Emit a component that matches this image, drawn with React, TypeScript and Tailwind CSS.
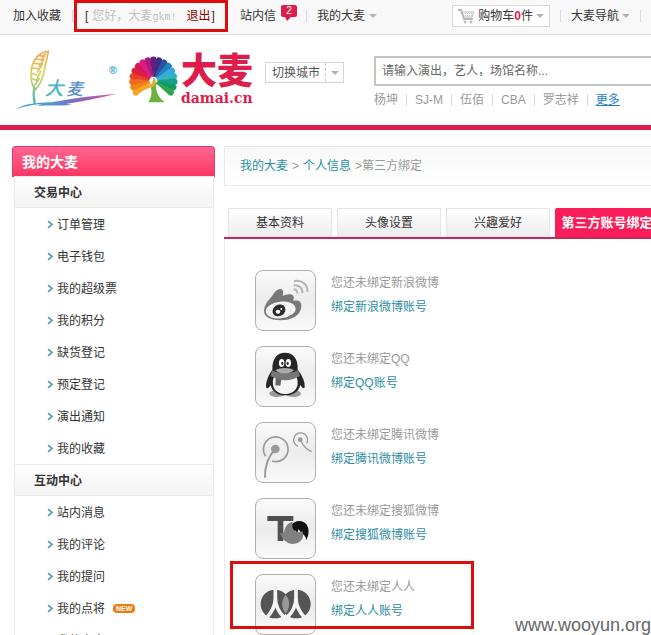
import type { ReactNode } from "react";

const tradeLinks = ["订单管理", "电子钱包", "我的超级票", "我的积分", "缺货登记", "预定登记", "演出通知", "我的收藏"];
const socialLinks = ["站内消息", "我的评论", "我的提问", "我的点将", "我的文章"];
const hotWords = ["杨坤", "SJ-M", "伍佰", "CBA", "罗志祥"];
const tabs = ["基本资料", "头像设置", "兴趣爱好"];

const petals = [
  "#f5a623", "#f08519", "#ed6c1f", "#e8422a", "#dc1f3c", "#d9155a", "#dd1a80", "#b01880",
  "#651d80", "#3f2a86", "#2552a3", "#2080c4", "#36a9dc", "#2fb3c0", "#169f8c", "#119b62", "#2fa84a",
];

function Caret() {
  return (
    <svg className="h-1 w-2 shrink-0" viewBox="0 0 8 4" aria-hidden="true">
      <path d="M0 0h8L4 4z" fill="#b3b3b3" />
    </svg>
  );
}

function Divider() {
  return <span className="h-3 w-px shrink-0 bg-[#d9d9d9]" />;
}

function WheatLogo() {
  return (
    <svg className="h-[61px] w-[102px] shrink-0" viewBox="48 150 306 183" role="img" aria-label="大麦">
      <defs>
        <linearGradient id="wheat" gradientUnits="userSpaceOnUse" x1="0" y1="152" x2="0" y2="305">
          <stop offset="0" stopColor="#f0a850" />
          <stop offset="0.5" stopColor="#d8d060" />
          <stop offset="1" stopColor="#56b8b0" />
        </linearGradient>
        <linearGradient id="ground" x1="0" y1="0" x2="1" y2="0">
          <stop offset="0" stopColor="#3ba8cf" />
          <stop offset="0.4" stopColor="#5a8fd0" />
          <stop offset="0.65" stopColor="#8e62b5" />
          <stop offset="1" stopColor="#dc5a9c" />
        </linearGradient>
      </defs>
      <g fill="none" stroke="url(#wheat)" strokeLinecap="round">
        <path d="M145 154C112 156 94 187 93 222c0 22 4 37 13 47 14-13 22-34 27-58 4-21 9-39 12-57z" strokeWidth="5" />
        <path d="M104 255l14-20M97 236l18 7M110 238l12-24M95 220l16 5M113 216l15-25M98 204l17 2M118 198l14-20M103 190l16 2M124 180l12-18M110 177l16 3M118 166l15 4" strokeWidth="5" />
        <path d="M103 262c-3 16-3 31 1 47" strokeWidth="7" />
      </g>
      <path d="M48 328c13-10 28-14 47-17 27-4 53-2 78-7 60-12 116-17 178-23-47 11-99 22-154 31 5 1 11 1 18 2-35 5-67 1-101 4 5-3 9-4 14-5-29 0-55 6-80 15z" fill="url(#ground)" />
      <text x="134" y="286" fontSize="56" fontWeight="500" fontStyle="italic" fontFamily="'Noto Sans CJK SC', sans-serif" fill="#4ab5c2">大</text>
      <text x="199" y="286" fontSize="50" fontWeight="500" fontStyle="italic" fontFamily="'Noto Sans CJK SC', sans-serif" fill="#578fce">麦</text>
      <text x="327" y="221" fontSize="32" fontWeight="700" fontFamily="'Liberation Sans', sans-serif" fill="#3b9bd0">®</text>
    </svg>
  );
}

function FlowerLogo() {
  return (
    <svg className="h-12 w-[49px] shrink-0" viewBox="387 166 147 144" aria-hidden="true">
      {petals.map((color, i) => (
        <path key={color} d="M458 228L450.500 177a9.500 9.500 0 0 1 19 0L462 228z" fill={color} transform={`rotate(${-124 + i * 15.5} 460 240)`} />
      ))}
      <path d="M434 312l22-58h12l34 58z" fill="#fff" />
      <path d="M445 305c9-14 12-29 8-42l8-31c4 4 6 9 5 15l11-8-10 17c2 20 10 37 28 49z" fill="#6cb33e" />
      <path d="M420 276c10-11 20-22 34-27 9-5 10-13 4-22 12 10 11 22 2 31-14 3-26 8-40 18z" fill="#f0a828" />
    </svg>
  );
}

function Cart() {
  return (
    <svg className="h-[15px] w-[17px] shrink-0" viewBox="0 0 17 15" fill="none" stroke="#b8b8b8" aria-hidden="true">
      <path d="M0 1h3l3 9h9" strokeWidth="2" />
      <path d="M5 3h11l-2 5H6" />
      <path d="M7 4.500h8M7 6.500h7" strokeDasharray="1 1" />
      <circle cx="7" cy="13" r="1" fill="#b8b8b8" />
      <circle cx="13" cy="13" r="1" fill="#b8b8b8" />
    </svg>
  );
}

type Account = { name: string; link: string; viewBox: string; art: ReactNode; marked?: boolean };

const accounts: Account[] = [
  {
    name: "新浪微博",
    link: "绑定新浪微博账号",
    viewBox: "49 33 177 177",
    art: (
      <>
        <path d="M73 154c0-18 12-32 22-43 6-8 13-22 26-24 9-1 12 9 8 21 10-5 28-8 32 0 3 5 1 10-1 15 16-4 26 2 25 15 0 28-31 43-61 43-28 0-51-9-51-27z" fill="#787878" />
        <ellipse cx="123" cy="150" rx="45" ry="25" fill="#f4f4f4" transform="rotate(-7 123 150)" />
        <ellipse cx="118" cy="151" rx="20" ry="17" fill="#2b2b2b" transform="rotate(-30 118 151)" />
        <ellipse cx="115" cy="155" rx="7" ry="6" fill="#fff" />
        <circle cx="125" cy="147" r="3" fill="#fff" />
        <path d="M163 63c24-4 42 10 40 33M162 76c16-2 27 8 26 23M162 89c7-1 12 4 11 11" fill="none" stroke="#b5b5b5" strokeWidth="6" />
      </>
    ),
  },
  {
    name: "QQ",
    link: "绑定QQ账号",
    viewBox: "49 261 177 177",
    art: (
      <>
        <ellipse cx="112" cy="401" rx="23" ry="10" fill="#999" />
        <ellipse cx="161" cy="401" rx="23" ry="10" fill="#999" />
        <path d="M98 329c-1-33 14-51 38-51s40 18 38 51c12 15 23 35 21 53-1 6-8 2-13-7-5 20-22 31-45 31s-39-10-44-31c-5 9-12 13-14 6 0-18 8-37 19-52z" fill="#252525" />
        <path d="M104 347h65c15 33-6 55-32 55s-47-20-33-55z" fill="#f5f5f5" />
        <path d="M97 331c23 12 54 12 78 0l6 17c-29 17-60 17-88 0z" fill="#777" />
        <path d="M108 354l17 4-3 19-15-1z" fill="#666" />
        <ellipse cx="126" cy="309" rx="8" ry="12" fill="#fff" />
        <ellipse cx="146" cy="309" rx="8" ry="12" fill="#fff" />
        <ellipse cx="128" cy="310" rx="3" ry="5" fill="#222" />
        <ellipse cx="144" cy="310" rx="3" ry="5" fill="#222" />
        <path d="M107 331c14-9 43-9 56 0-15 13-41 13-56 0z" fill="#aaa" />
      </>
    ),
  },
  {
    name: "腾讯微博",
    link: "绑定腾讯微博账号",
    viewBox: "49 39 177 177",
    art: (
      <g fill="none" stroke="#999">
        <path d="M78 139a37 37 0 1 1 19 14" strokeWidth="5" />
        <path d="M107 117c-22 23-32 52-31 86" strokeWidth="6" />
        <circle cx="107" cy="117" r="13" fill="#999" stroke="none" />
        <path d="M175 109a21 21 0 1 1 26-9" strokeWidth="4" />
        <path d="M182 89c7 17 18 29 34 36" strokeWidth="4" />
        <circle cx="182" cy="89" r="7" fill="#999" stroke="none" />
      </g>
    ),
  },
  {
    name: "搜狐微博",
    link: "绑定搜狐微博账号",
    viewBox: "49 267 177 177",
    art: (
      <>
        <path d="M83 318h78v15h-30v60h-17v-60H83z" fill="#505050" />
        <path d="M152 349c8-14 25-19 38-14 18 7 22 33 10 55-2-12-8-18-16-21l-7-12-4 12-7-8-5 8z" fill="#111" />
        <path d="M121 369c6 3 11 1 13-6 3-16 12-25 25-28-3 17 1 27 13 31 7 1 12 0 16-3 6 14 1 27-10 34-23 12-48 0-57-28z" fill="#808080" />
      </>
    ),
  },
  {
    name: "人人",
    link: "绑定人人账号",
    viewBox: "109 60 177 177",
    marked: true,
    art: (
      <>
        <circle cx="166" cy="147" r="43" fill="#555" />
        <circle cx="230" cy="147" r="43" fill="#555" />
        <path d="M198 119c14 18 14 38 0 56-14-18-14-38 0-56z" fill="#999" />
        <path d="M167 100v29c0 23-9 41-26 59M167 129c0 23 9 41 27 59M229 100v29c0 23-9 41-27 59M229 129c0 23 9 41 26 59" fill="none" stroke="#f4f4f4" strokeWidth="11" />
      </>
    ),
  },
];

function AccountRow({ account }: { account: Account }) {
  return (
    <li className="relative flex gap-[15px]">
      <span className="h-[61px] w-[61px] shrink-0 overflow-hidden rounded-lg border border-[#b0b0b0] bg-linear-to-b from-[#fafafa] from-0% via-[#ececec] via-50% to-[#fafafa]">
        <svg className="size-full" viewBox={account.viewBox} aria-hidden="true">{account.art}</svg>
      </span>
      <div className="pt-px leading-6">
        <p className="text-[#999]">您还未绑定{account.name}</p>
        <a href="#bind" className="text-[#2b8ea3]">{account.link}</a>
      </div>
      {account.marked && <span className="pointer-events-none absolute -top-[13px] -left-[25px] h-[68px] w-[244px] border-3 border-[#df0c0c]" />}
    </li>
  );
}

function MenuSection({ title, links }: { title: string; links: string[] }) {
  return (
    <section>
      <h3 className="h-8 border-y border-[#e9e9e9] bg-linear-to-b from-white to-[#f3f3f3] pl-[19px] leading-8 font-bold">{title}</h3>
      <ul>
        {links.map((label) => (
          <li key={label} className="flex h-8 items-center pt-px pl-8">
            <a href="#menu" className="flex items-center gap-1">
              <svg className="h-[7px] w-[6px]" viewBox="0 0 6 7" fill="none" stroke="#3e8da5" strokeWidth="1.500" aria-hidden="true">
                <path d="M1 0l4 3.500L1 7" />
              </svg>
              {label}
            </a>
            {label === "我的点将" && (
              <span className="ml-2 rounded-sm bg-[#f07a10] px-[3px] font-['Liberation_Sans',sans-serif] text-[7px] leading-[9px] font-bold text-white">NEW</span>
            )}
          </li>
        ))}
      </ul>
    </section>
  );
}

export default function App() {
  return (
    <div className="relative h-screen overflow-hidden bg-white font-['Liberation_Sans','Noto_Sans_CJK_SC',sans-serif] text-xs text-[#333]">
      <nav className="flex h-[35px] items-center border-b border-[#dedede] bg-[#f8f8f8] pb-[2px] pl-[13px] whitespace-nowrap">
        <a href="#favorite">加入收藏</a>
        <div className="relative ml-[11px] flex items-center">
          <Divider />
          <p className="flex w-[167px] items-center pl-3">
            [<span className="ml-1 text-[#c0c0c0]">您好，大麦<span className="font-['Liberation_Mono',monospace] text-[10px]">gkm!</span></span>
            <a href="#logout" className="mr-px ml-[10px] text-[#8b0000]">退出</a>]
          </p>
          <span className="pointer-events-none absolute -top-2 left-[2px] h-8 w-[154px] border-3 border-[#df0c0c]" />
        </div>
        <a href="#messages" className="flex items-center gap-[5px]">
          站内信
          <span className="relative mb-[10px] h-3 w-4 rounded-xs bg-[#dd1d4a] text-center text-[10px] leading-3 text-white">
            2
            <svg className="absolute top-3 left-1 h-[4px] w-[6px]" viewBox="0 0 6 4" aria-hidden="true"><path d="M0 0h6L2 4z" fill="#dd1d4a" /></svg>
          </span>
        </a>
        <div className="ml-[9px] flex items-center gap-[10px]">
          <Divider />
          <button type="button" className="flex items-center gap-1">我的大麦<Caret /></button>
        </div>
        <div className="ml-auto flex items-center gap-[10px] pr-[10px]">
          <button type="button" className="flex h-[22px] items-center gap-[3px] border border-[#d9d9d9] bg-white px-[5px]">
            <Cart />
            <span>购物车<b className="text-[#dd1d4a]">0</b>件</span>
            <Caret />
          </button>
          <Divider />
          <button type="button" className="flex items-center gap-[3px]">大麦导航<Caret /></button>
          <Divider />
        </div>
      </nav>

      <header className="flex h-[95px] items-center border-b-5 border-[#dd1d4a] pl-4">
        <WheatLogo />
        <a href="#home" className="ml-[11px] flex shrink-0 items-center gap-[3px] text-[#dd1d4a]">
          <FlowerLogo />
          <span className="flex w-[74px] flex-col whitespace-nowrap">
            <span className="text-[36px] leading-9 font-black">大麦</span>
            <span className="font-['DejaVu_Serif',serif] text-[14px] leading-4 font-bold">damai.cn</span>
          </span>
        </a>
        <button type="button" className="mb-[15px] ml-[10px] flex h-[21px] shrink-0 items-center border border-[#d5d5d5] pr-1 pl-[6px] text-[#555]">
          切换城市
          <span className="mr-[5px] ml-[5px] h-full border-l border-dashed border-[#ccc]" />
          <Caret />
        </button>
        <form className="ml-[30px] min-w-0 flex-1 pt-1">
          <input
            aria-label="搜索"
            placeholder="请输入演出，艺人，场馆名称..."
            className="block h-[30px] w-full rounded-l-xs border-2 border-r-0 border-[#c4c4c4] px-[6px] placeholder:text-[#666]"
          />
          <div className="mt-[6px] flex h-4 items-center gap-2 whitespace-nowrap text-[#999]">
            {hotWords.map((word) => (
              <span key={word} className="flex items-center gap-2"><a href="#search">{word}</a><Divider /></span>
            ))}
            <a href="#more" className="text-[#2680bd] underline">更多</a>
          </div>
        </form>
      </header>

      <div className="flex items-start gap-[9px] pt-4 pl-3">
        <aside className="w-[203px] shrink-0">
          <h2 className="h-[31px] rounded-t-sm border border-b-0 border-[#e03a68] bg-linear-to-b from-[#ff6490] to-[#fb3263] pl-[9px] text-sm leading-[30px] font-bold text-white">我的大麦</h2>
          <div className="-mt-px mr-px ml-[2px] border-x border-[#e9e9e9]">
            <MenuSection title="交易中心" links={tradeLinks} />
            <MenuSection title="互动中心" links={socialLinks} />
          </div>
        </aside>

        <main className="min-w-0 flex-1">
          <div className="flex h-10 items-center gap-1 border border-r-0 border-[#e9e9e9] bg-linear-to-b from-[#f8f8f8] to-white pl-[15px] text-[#999]">
            <a href="#mine" className="text-[#2b8ea3]">我的大麦</a>
            <span>&gt;</span>
            <a href="#profile" className="text-[#2b8ea3]">个人信息</a>
            <span>&gt;第三方绑定</span>
          </div>
          <div className="mt-[22px] flex h-[31px] gap-[5px] border-b-2 border-[#c7285a] pl-1 whitespace-nowrap">
            {tabs.map((tab) => (
              <button key={tab} type="button" className="w-[104px] shrink-0 border border-b-0 border-[#e6e6e6] bg-linear-to-b from-white to-[#ececec]">{tab}</button>
            ))}
            <button type="button" className="w-[104px] shrink-0 rounded-t-xs bg-[#fb1d59] text-[13px] font-bold text-white">第三方账号绑定</button>
          </div>
          <ul className="flex flex-col gap-[15px] border-l border-[#ebebeb] pt-[31px] pb-8 pl-[30px]">
            {accounts.map((account) => <AccountRow key={account.name} account={account} />)}
          </ul>
        </main>
      </div>
      <span className="absolute right-0 bottom-0 text-lg leading-5 text-[#666]">www.wooyun.org</span>
    </div>
  );
}
